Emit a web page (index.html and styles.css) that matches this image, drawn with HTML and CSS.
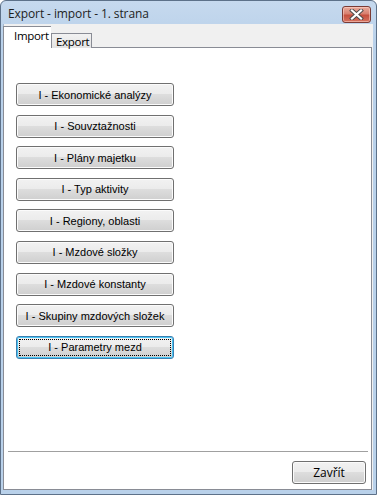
FILE: index.html
```html
<!DOCTYPE html>
<html>
<head>
<meta charset="utf-8">
<link rel="stylesheet" href="styles.css">
</head>
<body>
<div class="window">
  <div class="titlebar">
    <span class="title">Export - import - 1. strana</span>
    <div class="close">
      <svg width="17" height="11" viewBox="0 0 17 11">
        <path d="M4 1.5 L13 9.5 M13 1.5 L4 9.5" stroke="#4a4a4a" stroke-width="4" stroke-linecap="square" fill="none"/>
        <path d="M4 1.5 L13 9.5 M13 1.5 L4 9.5" stroke="#ffffff" stroke-width="2.2" stroke-linecap="square" fill="none"/>
      </svg>
    </div>
  </div>
  <div class="client">
    <div class="tabs">
      <div class="tab active">Import</div>
      <div class="tab">Export</div>
    </div>
    <div class="page">
      <div class="buttons">
        <div class="btn">I - Ekonomické analýzy</div>
        <div class="btn">I - Souvztažnosti</div>
        <div class="btn">I - Plány majetku</div>
        <div class="btn">I - Typ aktivity</div>
        <div class="btn">I - Regiony, oblasti</div>
        <div class="btn">I - Mzdové složky</div>
        <div class="btn">I - Mzdové konstanty</div>
        <div class="btn">I - Skupiny mzdových složek</div>
        <div class="btn focused"><span class="focus">I - Parametry mezd</span></div>
      </div>
      <div class="footer">
        <div class="sep"></div>
        <div class="btn close-btn">Zavřít</div>
      </div>
    </div>
  </div>
</div>
</body>
</html>
```

FILE: styles.css
```css
html, body {
  margin: 0;
  padding: 0;
  background: #ffffff;
}
.window {
  box-sizing: border-box;
  width: 377px;
  height: 495px;
  border: 1px solid #5d7189;
  border-radius: 6px 6px 0 0;
  background: linear-gradient(#c6d9ee, #b9d1ea 40px, #b9d1ea);
  padding: 0 3px 4px 2px;
  display: flex;
  flex-direction: column;
}
.titlebar {
  height: 22px;
  display: flex;
  align-items: center;
  justify-content: space-between;
  flex: none;
}
.title {
  font-family: "Open Sans", "Noto Sans", sans-serif;
  font-size: 12px;
  color: #1e1e1e;
  padding-left: 5px;
  padding-top: 2px;
  letter-spacing: -0.1px;
}
.close {
  box-sizing: border-box;
  width: 29px;
  height: 17px;
  margin-top: 5px;
  margin-right: 2px;
  border: 1px solid #7a3b35;
  border-radius: 3px;
  background: linear-gradient(#e9aa9c, #d8806f 45%, #c6503e 55%, #d6725f);
  box-shadow: inset 0 0 0 1px rgba(255, 220, 210, 0.5);
  display: flex;
  align-items: center;
  justify-content: center;
}
.client {
  flex: 1;
  background: #f0f0f0;
  display: flex;
  flex-direction: column;
  border-left: 1px solid #a5b8cd;
  margin-top: 1px;
}
.tabs {
  height: 24px;
  display: flex;
  align-items: flex-end;
  position: relative;
  z-index: 1;
  margin-bottom: -1px;
}
.tab {
  box-sizing: border-box;
  font-family: "Open Sans", "Noto Sans", sans-serif;
  font-size: 11.5px;
  letter-spacing: -0.3px;
  color: #000;
  border: 1px solid #898c95;
  border-bottom: none;
  white-space: nowrap;
}
.tab.active {
  background: #ffffff;
  height: 22px;
  line-height: 18px;
  width: 48px;
  padding: 0 0 0 10px;
  border-right: none;
  margin-left: -1px;
}
.tab:not(.active) {
  background: linear-gradient(#f2f2f2, #e3e3e3);
  height: 15px;
  width: 41px;
  padding-left: 4px;
  line-height: 15px;
}
.page {
  flex: 1;
  box-sizing: border-box;
  background: #ffffff;
  border: 1px solid #898c95;
  margin-left: -1px;
  margin-right: 1px;
  display: flex;
  flex-direction: column;
  padding: 35px 5px 5px 12px;
}
.buttons {
  display: flex;
  flex-direction: column;
  gap: 8.6px;
}
.btn {
  box-sizing: border-box;
  width: 158px;
  height: 23px;
  border: 1px solid #707070;
  border-radius: 3px;
  background: linear-gradient(#f2f2f2, #ebebeb 50%, #dddddd 50%, #cfcfcf);
  box-shadow: inset 0 0 0 1px #fbfbfb;
  font-family: "Liberation Sans", Arial, sans-serif;
  font-size: 11px;
  color: #000;
  display: flex;
  align-items: center;
  justify-content: center;
}
.btn.focused {
  border-color: #3c7fb1;
  box-shadow: inset 0 0 0 1px #48c6f5;
  padding: 2px;
}
.focus {
  box-sizing: border-box;
  width: 100%;
  height: 100%;
  border: 1px dotted #000;
  display: flex;
  align-items: center;
  justify-content: center;
}
.footer {
  margin-top: auto;
  display: flex;
  flex-direction: column;
  align-items: flex-end;
  margin-left: -8px;
}
.sep {
  align-self: stretch;
  height: 1px;
  background: #a0a0a0;
  margin-right: -2px;
  margin-bottom: 9px;
}
.close-btn {
  width: 74px;
  height: 23px;
  font-family: "Open Sans", "Noto Sans", sans-serif;
  font-size: 12px;
}
```
